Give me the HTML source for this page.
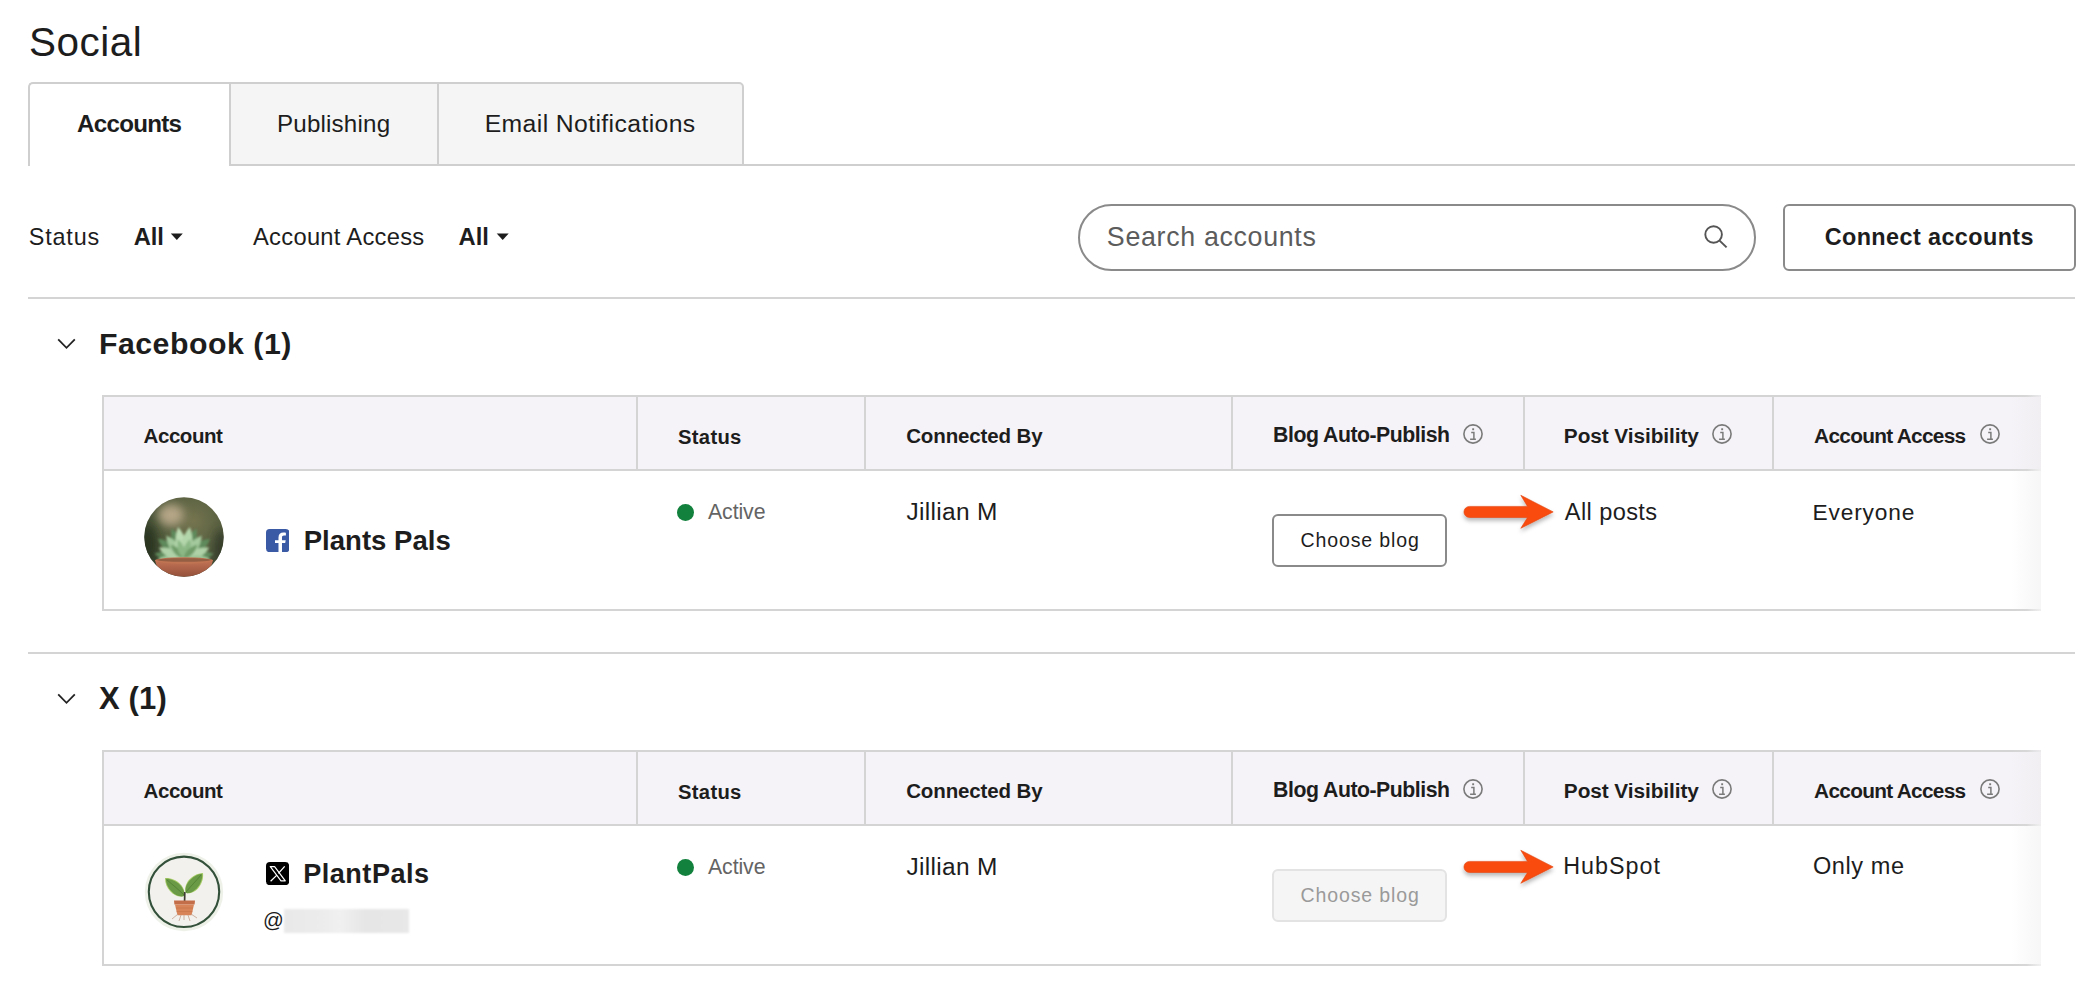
<!DOCTYPE html>
<html><head><meta charset="utf-8">
<style>
html,body{margin:0;padding:0;background:#fff;}
body{width:2100px;height:991px;position:relative;overflow:hidden;font-family:"Liberation Sans",sans-serif;color:#1d1d1d;}
.a{position:absolute;}
.t{position:absolute;white-space:nowrap;}
.b{font-weight:bold;}
.hl{position:absolute;background:#d4d4d4;}
</style></head><body>
<div class="t" style="left:28.98px;top:21.63px;font-size:40.48px;line-height:40.48px;letter-spacing:0.531px;">Social</div>
<div class="a" style="left:28px;top:82px;width:201.5px;height:84px;border-left:2px solid #cfcfcf;border-top:2px solid #cfcfcf;border-top-left-radius:5px;background:#fff;box-sizing:border-box;"></div>
<div class="a" style="left:228.5px;top:82px;width:210px;height:84px;border:2px solid #cfcfcf;border-right:none;background:#f5f5f5;box-sizing:border-box;"></div>
<div class="a" style="left:436.5px;top:82px;width:307.5px;height:84px;border:2px solid #cfcfcf;border-top-right-radius:5px;background:#f5f5f5;box-sizing:border-box;"></div>
<div class="hl" style="left:742px;top:164px;width:1333px;height:2px;background:#cfcfcf;"></div>
<div class="t b" style="left:76.97px;top:112.23px;font-size:24.17px;line-height:24.17px;letter-spacing:-0.714px;">Accounts</div>
<div class="t" style="left:276.97px;top:112.00px;font-size:24.17px;line-height:24.17px;letter-spacing:0.183px;">Publishing</div>
<div class="t" style="left:484.72px;top:111.94px;font-size:24.76px;line-height:24.76px;letter-spacing:0.385px;">Email Notifications</div>
<div class="t" style="left:28.73px;top:225.89px;font-size:23.4px;line-height:23.4px;letter-spacing:0.832px;">Status</div>
<div class="t b" style="left:133.69px;top:225.60px;font-size:23.74px;line-height:23.74px;letter-spacing:-0.105px;">All</div>
<svg class="a" style="left:170px;top:233px" width="14" height="8"><path d="M0.8 0.6 H12.8 L6.8 7 Z" fill="#1d1d1d"/></svg>
<div class="t" style="left:253.00px;top:225.60px;font-size:23.74px;line-height:23.74px;letter-spacing:0.282px;">Account Access</div>
<div class="t b" style="left:458.59px;top:225.60px;font-size:23.74px;line-height:23.74px;letter-spacing:-0.005px;">All</div>
<svg class="a" style="left:496px;top:233px" width="14" height="8"><path d="M0.7 0.6 H12.7 L6.7 7 Z" fill="#1d1d1d"/></svg>
<div class="a" style="left:1078px;top:203.5px;width:678px;height:67px;border:2px solid #8a8a8a;border-radius:34px;box-sizing:border-box;"></div>
<div class="t" style="left:1106.86px;top:223.87px;font-size:26.84px;line-height:26.84px;letter-spacing:0.654px;color:#5c5c5c;">Search accounts</div>
<svg class="a" style="left:1700px;top:220px" width="32" height="32"><circle cx="13.6" cy="14.5" r="8.3" fill="none" stroke="#555" stroke-width="1.9"/><path d="M19.6 20.6 L26.6 27.4" stroke="#555" stroke-width="2"/></svg>
<div class="a" style="left:1782.5px;top:203.5px;width:293px;height:67px;border:2px solid #8a8a8a;border-radius:6px;box-sizing:border-box;"></div>
<div class="t b" style="left:1824.66px;top:226.19px;font-size:23.4px;line-height:23.4px;letter-spacing:0.409px;">Connect accounts</div>
<div class="hl" style="left:28px;top:296.5px;width:2047px;height:2px;"></div>
<svg class="a" style="left:56px;top:337px" width="22" height="14"><path d="M2.2 2.3 L10.5 10.8 L18.8 2.3" fill="none" stroke="#222" stroke-width="1.8"/></svg>
<div class="t b" style="left:98.88px;top:328.65px;font-size:30.29px;line-height:30.29px;letter-spacing:0.522px;">Facebook (1)</div>
<div class="a" style="left:102px;top:395px;width:1939px;height:74px;background:#f6f3f8;"></div>
<div class="hl" style="left:102px;top:395px;width:1939px;height:2px;background:linear-gradient(to right,#d4d4d4 0,#d4d4d4 1925px,rgba(212,212,212,0.25) 1939px);"></div>
<div class="hl" style="left:102px;top:469px;width:1939px;height:2px;background:linear-gradient(to right,#d4d4d4 0,#d4d4d4 1925px,rgba(212,212,212,0.25) 1939px);"></div>
<div class="hl" style="left:102px;top:609px;width:1939px;height:2px;background:linear-gradient(to right,#d4d4d4 0,#d4d4d4 1925px,rgba(212,212,212,0.25) 1939px);"></div>
<div class="hl" style="left:102px;top:395px;width:2px;height:216px;"></div>
<div class="hl" style="left:636px;top:395px;width:2px;height:75px;"></div>
<div class="hl" style="left:864px;top:395px;width:2px;height:75px;"></div>
<div class="hl" style="left:1231px;top:395px;width:2px;height:75px;"></div>
<div class="hl" style="left:1523px;top:395px;width:2px;height:75px;"></div>
<div class="hl" style="left:1772px;top:395px;width:2px;height:75px;"></div>
<div class="a" style="left:2011px;top:395px;width:30px;height:216px;background:linear-gradient(to right,rgba(230,230,230,0),rgba(230,230,230,0.35));"></div>
<div class="t b" style="left:143.58px;top:426.31px;font-size:20.53px;line-height:20.53px;letter-spacing:-0.452px;">Account</div>
<div class="t b" style="left:678.09px;top:426.56px;font-size:20.24px;line-height:20.24px;letter-spacing:0.278px;">Status</div>
<div class="t b" style="left:906.18px;top:426.32px;font-size:20.53px;line-height:20.53px;letter-spacing:-0.137px;">Connected By</div>
<div class="t b" style="left:1273.11px;top:424.90px;font-size:21.26px;line-height:21.26px;letter-spacing:-0.48px;">Blog Auto-Publish</div>
<div class="t b" style="left:1563.84px;top:426.07px;font-size:20.82px;line-height:20.82px;letter-spacing:-0.08px;">Post Visibility</div>
<div class="t b" style="left:1814.08px;top:426.07px;font-size:20.82px;line-height:20.82px;letter-spacing:-0.702px;">Account Access</div>
<svg class="a" style="left:1460.9px;top:422.4px" width="24" height="24"><circle cx="12" cy="12" r="9.1" fill="none" stroke="#7a7a7a" stroke-width="1.6"/><rect x="11.2" y="6.3" width="1.9" height="1.9" fill="#7a7a7a"/><path d="M10.2 10.4 H12.9 V16.6 M9.1 17.2 H14.9" fill="none" stroke="#7a7a7a" stroke-width="1.5"/></svg>
<svg class="a" style="left:1709.9px;top:422.4px" width="24" height="24"><circle cx="12" cy="12" r="9.1" fill="none" stroke="#7a7a7a" stroke-width="1.6"/><rect x="11.2" y="6.3" width="1.9" height="1.9" fill="#7a7a7a"/><path d="M10.2 10.4 H12.9 V16.6 M9.1 17.2 H14.9" fill="none" stroke="#7a7a7a" stroke-width="1.5"/></svg>
<svg class="a" style="left:1977.9px;top:422.4px" width="24" height="24"><circle cx="12" cy="12" r="9.1" fill="none" stroke="#7a7a7a" stroke-width="1.6"/><rect x="11.2" y="6.3" width="1.9" height="1.9" fill="#7a7a7a"/><path d="M10.2 10.4 H12.9 V16.6 M9.1 17.2 H14.9" fill="none" stroke="#7a7a7a" stroke-width="1.5"/></svg>
<div class="a" style="left:677px;top:504px;width:17px;height:17px;border-radius:50%;background:#12813d;"></div>
<div class="t" style="left:708.00px;top:501.70px;font-size:21.26px;line-height:21.26px;letter-spacing:-0.076px;color:#646464;">Active</div>
<div class="t" style="left:906.51px;top:499.79px;font-size:24.46px;line-height:24.46px;letter-spacing:0.304px;">Jillian M</div>
<svg class="a" style="left:1450px;top:487px;overflow:visible" width="120" height="50"><defs><filter id="sh512" x="-20%" y="-40%" width="140%" height="180%"><feDropShadow dx="0" dy="3" stdDeviation="2.2" flood-color="#000" flood-opacity="0.28"/></filter></defs><path filter="url(#sh512)" d="M19.5 19.4 H77.5 L70.8 8.3 L103.2 24.9 L70.8 41.3 L77.5 30.5 H19.5 A5.55 5.55 0 0 1 19.5 19.4 Z" fill="#f94b0c" stroke="#e04510" stroke-width="0.6"/></svg>
<div class="t b" style="left:303.67px;top:527.40px;font-size:27.52px;line-height:27.52px;letter-spacing:0.033px;">Plants Pals</div>
<div class="a" style="left:1272px;top:514px;width:175px;height:53px;border:2px solid #8a8a8a;border-radius:6px;box-sizing:border-box;background:#fff;"></div>
<div class="t" style="left:1300.62px;top:531.47px;font-size:19.52px;line-height:19.52px;letter-spacing:0.864px;">Choose blog</div>
<div class="t" style="left:1564.80px;top:500.53px;font-size:23.59px;line-height:23.59px;letter-spacing:0.396px;">All posts</div>
<div class="t" style="left:1812.48px;top:501.27px;font-size:22.72px;line-height:22.72px;letter-spacing:0.837px;">Everyone</div>
<div class="hl" style="left:28px;top:652px;width:2047px;height:2px;"></div>
<svg class="a" style="left:56px;top:692px" width="22" height="14"><path d="M2.2 2.3 L10.5 10.8 L18.8 2.3" fill="none" stroke="#222" stroke-width="1.8"/></svg>
<div class="t b" style="left:98.99px;top:683.04px;font-size:31.02px;line-height:31.02px;letter-spacing:0.138px;">X (1)</div>
<div class="a" style="left:102px;top:750px;width:1939px;height:74px;background:#f6f3f8;"></div>
<div class="hl" style="left:102px;top:750px;width:1939px;height:2px;background:linear-gradient(to right,#d4d4d4 0,#d4d4d4 1925px,rgba(212,212,212,0.25) 1939px);"></div>
<div class="hl" style="left:102px;top:824px;width:1939px;height:2px;background:linear-gradient(to right,#d4d4d4 0,#d4d4d4 1925px,rgba(212,212,212,0.25) 1939px);"></div>
<div class="hl" style="left:102px;top:964px;width:1939px;height:2px;background:linear-gradient(to right,#d4d4d4 0,#d4d4d4 1925px,rgba(212,212,212,0.25) 1939px);"></div>
<div class="hl" style="left:102px;top:750px;width:2px;height:216px;"></div>
<div class="hl" style="left:636px;top:750px;width:2px;height:75px;"></div>
<div class="hl" style="left:864px;top:750px;width:2px;height:75px;"></div>
<div class="hl" style="left:1231px;top:750px;width:2px;height:75px;"></div>
<div class="hl" style="left:1523px;top:750px;width:2px;height:75px;"></div>
<div class="hl" style="left:1772px;top:750px;width:2px;height:75px;"></div>
<div class="a" style="left:2011px;top:750px;width:30px;height:216px;background:linear-gradient(to right,rgba(230,230,230,0),rgba(230,230,230,0.35));"></div>
<div class="t b" style="left:143.58px;top:781.31px;font-size:20.53px;line-height:20.53px;letter-spacing:-0.452px;">Account</div>
<div class="t b" style="left:678.09px;top:781.56px;font-size:20.24px;line-height:20.24px;letter-spacing:0.278px;">Status</div>
<div class="t b" style="left:906.18px;top:781.32px;font-size:20.53px;line-height:20.53px;letter-spacing:-0.137px;">Connected By</div>
<div class="t b" style="left:1273.11px;top:779.90px;font-size:21.26px;line-height:21.26px;letter-spacing:-0.48px;">Blog Auto-Publish</div>
<div class="t b" style="left:1563.84px;top:781.07px;font-size:20.82px;line-height:20.82px;letter-spacing:-0.08px;">Post Visibility</div>
<div class="t b" style="left:1814.08px;top:781.07px;font-size:20.82px;line-height:20.82px;letter-spacing:-0.702px;">Account Access</div>
<svg class="a" style="left:1460.9px;top:777.4px" width="24" height="24"><circle cx="12" cy="12" r="9.1" fill="none" stroke="#7a7a7a" stroke-width="1.6"/><rect x="11.2" y="6.3" width="1.9" height="1.9" fill="#7a7a7a"/><path d="M10.2 10.4 H12.9 V16.6 M9.1 17.2 H14.9" fill="none" stroke="#7a7a7a" stroke-width="1.5"/></svg>
<svg class="a" style="left:1709.9px;top:777.4px" width="24" height="24"><circle cx="12" cy="12" r="9.1" fill="none" stroke="#7a7a7a" stroke-width="1.6"/><rect x="11.2" y="6.3" width="1.9" height="1.9" fill="#7a7a7a"/><path d="M10.2 10.4 H12.9 V16.6 M9.1 17.2 H14.9" fill="none" stroke="#7a7a7a" stroke-width="1.5"/></svg>
<svg class="a" style="left:1977.9px;top:777.4px" width="24" height="24"><circle cx="12" cy="12" r="9.1" fill="none" stroke="#7a7a7a" stroke-width="1.6"/><rect x="11.2" y="6.3" width="1.9" height="1.9" fill="#7a7a7a"/><path d="M10.2 10.4 H12.9 V16.6 M9.1 17.2 H14.9" fill="none" stroke="#7a7a7a" stroke-width="1.5"/></svg>
<div class="a" style="left:677px;top:859px;width:17px;height:17px;border-radius:50%;background:#12813d;"></div>
<div class="t" style="left:708.00px;top:856.70px;font-size:21.26px;line-height:21.26px;letter-spacing:-0.076px;color:#646464;">Active</div>
<div class="t" style="left:906.51px;top:854.79px;font-size:24.46px;line-height:24.46px;letter-spacing:0.304px;">Jillian M</div>
<svg class="a" style="left:1450px;top:842px;overflow:visible" width="120" height="50"><defs><filter id="sh867" x="-20%" y="-40%" width="140%" height="180%"><feDropShadow dx="0" dy="3" stdDeviation="2.2" flood-color="#000" flood-opacity="0.28"/></filter></defs><path filter="url(#sh867)" d="M19.5 19.4 H77.5 L70.8 8.3 L103.2 24.9 L70.8 41.3 L77.5 30.5 H19.5 A5.55 5.55 0 0 1 19.5 19.4 Z" fill="#f94b0c" stroke="#e04510" stroke-width="0.6"/></svg>
<div class="t b" style="left:303.20px;top:860.47px;font-size:27.09px;line-height:27.09px;letter-spacing:0.499px;">PlantPals</div>
<div class="a" style="left:1272px;top:869px;width:175px;height:53px;border:2px solid #e3e3e3;border-radius:6px;box-sizing:border-box;background:#f5f5f5;"></div>
<div class="t" style="left:1300.62px;top:886.07px;font-size:19.52px;line-height:19.52px;letter-spacing:0.864px;color:#9a9a9a;">Choose blog</div>
<div class="t" style="left:1563.14px;top:855.27px;font-size:23.3px;line-height:23.3px;letter-spacing:1.038px;">HubSpot</div>
<div class="t" style="left:1812.92px;top:854.67px;font-size:23.54px;line-height:23.54px;letter-spacing:0.592px;">Only me</div>
<svg class="a" style="left:143.8px;top:497px" width="80" height="80" viewBox="0 0 80 80">
<defs>
<clipPath id="fbc"><circle cx="40" cy="40" r="39.7"/></clipPath>
<radialGradient id="fbbg" cx="0.62" cy="0.3" r="0.8"><stop offset="0" stop-color="#75744f"/><stop offset="0.5" stop-color="#555e3f"/><stop offset="1" stop-color="#333d2c"/></radialGradient>
<filter id="fbbl" x="-80%" y="-80%" width="260%" height="260%"><feGaussianBlur stdDeviation="5"/></filter>
<filter id="fbbl2" x="-20%" y="-20%" width="140%" height="140%"><feGaussianBlur stdDeviation="0.8"/></filter>
<linearGradient id="pot" x1="0" y1="0" x2="0" y2="1"><stop offset="0" stop-color="#c47456"/><stop offset="1" stop-color="#93503a"/></linearGradient>
</defs>
<g clip-path="url(#fbc)">
<rect width="80" height="80" fill="url(#fbbg)"/>
<ellipse cx="27" cy="18" rx="13" ry="11" fill="#b5a687" filter="url(#fbbl)"/>
<ellipse cx="4" cy="46" rx="9" ry="18" fill="#27301f" filter="url(#fbbl)" opacity="0.85"/>
<ellipse cx="77" cy="50" rx="7" ry="18" fill="#2d3526" filter="url(#fbbl)" opacity="0.8"/>
<g filter="url(#fbbl2)">''' + '<path transform="translate(40 62) rotate(-80) scale(1.0)" d="M0 0 C-7 -8 -6 -20 0 -30 C6 -20 7 -8 0 0 Z" fill="#5f8a5b"/><path transform="translate(40 62) rotate(-52) scale(1.1)" d="M0 0 C-7 -8 -6 -20 0 -30 C6 -20 7 -8 0 0 Z" fill="#5f8a5b"/><path transform="translate(40 62) rotate(-22) scale(1.1)" d="M0 0 C-7 -8 -6 -20 0 -30 C6 -20 7 -8 0 0 Z" fill="#5f8a5b"/><path transform="translate(40 62) rotate(22) scale(1.1)" d="M0 0 C-7 -8 -6 -20 0 -30 C6 -20 7 -8 0 0 Z" fill="#5f8a5b"/><path transform="translate(40 62) rotate(52) scale(1.1)" d="M0 0 C-7 -8 -6 -20 0 -30 C6 -20 7 -8 0 0 Z" fill="#5f8a5b"/><path transform="translate(40 62) rotate(80) scale(1.0)" d="M0 0 C-7 -8 -6 -20 0 -30 C6 -20 7 -8 0 0 Z" fill="#5f8a5b"/><path transform="translate(40 63) rotate(-88) scale(0.95)" d="M0 0 C-6.5 -7 -5.5 -19 0 -28 C5.5 -19 6.5 -7 0 0 Z" fill="#9cc496"/><path transform="translate(40 63) rotate(-64) scale(1.0)" d="M0 0 C-6.5 -7 -5.5 -19 0 -28 C5.5 -19 6.5 -7 0 0 Z" fill="#b0d2a8"/><path transform="translate(40 63) rotate(-36) scale(1.08)" d="M0 0 C-6.5 -7 -5.5 -19 0 -28 C5.5 -19 6.5 -7 0 0 Z" fill="#a3c99c"/><path transform="translate(40 63) rotate(-10) scale(1.2)" d="M0 0 C-6.5 -7 -5.5 -19 0 -28 C5.5 -19 6.5 -7 0 0 Z" fill="#bcdcb3"/><path transform="translate(40 63) rotate(10) scale(1.2)" d="M0 0 C-6.5 -7 -5.5 -19 0 -28 C5.5 -19 6.5 -7 0 0 Z" fill="#b3d5aa"/><path transform="translate(40 63) rotate(36) scale(1.08)" d="M0 0 C-6.5 -7 -5.5 -19 0 -28 C5.5 -19 6.5 -7 0 0 Z" fill="#a3c99c"/><path transform="translate(40 63) rotate(64) scale(1.0)" d="M0 0 C-6.5 -7 -5.5 -19 0 -28 C5.5 -19 6.5 -7 0 0 Z" fill="#b0d2a8"/><path transform="translate(40 63) rotate(88) scale(0.95)" d="M0 0 C-6.5 -7 -5.5 -19 0 -28 C5.5 -19 6.5 -7 0 0 Z" fill="#9cc496"/><path transform="translate(40 61) rotate(-45) scale(0.9)" d="M0 0 C-5 -6 -4 -14 0 -21 C4 -14 5 -6 0 0 Z" fill="#6f9c69"/><path transform="translate(40 61) rotate(-18) scale(0.95)" d="M0 0 C-5 -6 -4 -14 0 -21 C4 -14 5 -6 0 0 Z" fill="#8cb886"/><path transform="translate(40 61) rotate(18) scale(0.95)" d="M0 0 C-5 -6 -4 -14 0 -21 C4 -14 5 -6 0 0 Z" fill="#8cb886"/><path transform="translate(40 61) rotate(45) scale(0.9)" d="M0 0 C-5 -6 -4 -14 0 -21 C4 -14 5 -6 0 0 Z" fill="#6f9c69"/>' + '''</g>
<path d="M11 63 H69 C67 74 58 80 40 80 C22 80 13 74 11 63 Z" fill="url(#pot)"/>
<ellipse cx="40" cy="63.5" rx="29" ry="3.2" fill="#c07452"/>
<ellipse cx="40" cy="63" rx="27" ry="1.8" fill="#6a4a36" opacity="0.5"/>
</g>
</svg>
<svg class="a" style="left:265.5px;top:528.8px" width="23.4" height="23.2" viewBox="0 0 23.4 23.2">
<rect x="0" y="0" width="23.4" height="23.2" rx="3.6" fill="#3b5aa6"/>
<path d="M12.5 23.2 V13.9 H9 V11.2 H12.5 V8.6 C12.5 5.3 14.4 3.6 17.4 3.6 C18.6 3.6 19.6 3.7 19.9 3.8 V6.6 H18 C16.5 6.6 16 7.4 16 8.6 V11.2 H19.7 L19.2 13.9 H16 V23.2 Z" fill="#fff"/>
</svg>
<svg class="a" style="left:143.5px;top:851.5px" width="80" height="80" viewBox="0 0 80 80">
<defs><filter id="xbl" x="-20%" y="-20%" width="140%" height="140%"><feGaussianBlur stdDeviation="0.45"/></filter></defs>
<circle cx="40" cy="40" r="39.2" fill="#edf1e8"/>
<circle cx="40" cy="39.8" r="35.2" fill="#f2f1ed" stroke="#33503a" stroke-width="2.1"/>
<g filter="url(#xbl)">
<path d="M40.0 44.0 C42.7 35.5 32.5 25.2 21.0 26.0 C20.9 37.6 31.6 47.1 40.0 44.0 Z" fill="#a9cd6a"/><path d="M40.0 44.0 C41.9 36.5 32.3 26.7 21.8 26.8 C22.2 37.3 32.6 46.4 40.0 44.0 Z" fill="#6a9a44"/><path d="M42.0 41.0 C50.6 43.2 60.4 32.5 59.0 21.0 C47.4 21.5 38.5 32.8 42.0 41.0 Z" fill="#a9cd6a"/><path d="M42.0 41.0 C49.6 42.5 58.9 32.3 58.2 21.8 C47.8 22.9 39.2 33.7 42.0 41.0 Z" fill="#6a9a44"/>
<path d="M23 28 C29 33 35 38 40 43" stroke="#4f7d34" stroke-width="0.8" fill="none"/>
<path d="M57 23 C52 29 46 35 42 40" stroke="#4f7d34" stroke-width="0.8" fill="none"/>
<path d="M40.8 40 L40.6 49" stroke="#3e3e32" stroke-width="1.7"/>
<path d="M30 48.5 H51 L50.6 52.6 H30.4 Z" fill="#c46e48"/>
<path d="M31 52.6 H50 L47.6 63.2 H33.4 Z" fill="#d88458"/>
<path d="M32 56 H49 M32.6 59.5 H48.4" stroke="#c7744c" stroke-width="0.6"/>
<path d="M34 62 L28 67 M37 63 L35 69 M44 63 L46 69 M47 62 L53 66 M40 63 L40 68" stroke="#c4a08e" stroke-width="0.8"/>
</g>
</svg>
<svg class="a" style="left:265.5px;top:861.6px" width="23.2" height="23.2" viewBox="0 0 23.2 23.2">
<rect x="0" y="0" width="23.2" height="23.2" rx="4" fill="#000"/>
<path d="M4.3 4.6 H8.6 L19.3 18.8 H15 Z" fill="none" stroke="#fff" stroke-width="1.2" stroke-linejoin="round"/>
<path d="M18.7 4.4 L12.4 11.4 M10.9 13.1 L4.6 19.2" stroke="#fff" stroke-width="1.3"/>
</svg>
<div class="t" style="left:263.00px;top:909.50px;font-size:20.5px;line-height:20.5px;letter-spacing:0px;font-size:20.5px;">@</div>
<div class="a" style="left:284px;top:909px;width:125px;height:23.5px;background:linear-gradient(to right,#e9e9e9 0%,#ececec 30%,#f0f0f0 45%,#e6e6e6 65%,#e8e8e8 100%);filter:blur(0.8px);"></div>
</body></html>
